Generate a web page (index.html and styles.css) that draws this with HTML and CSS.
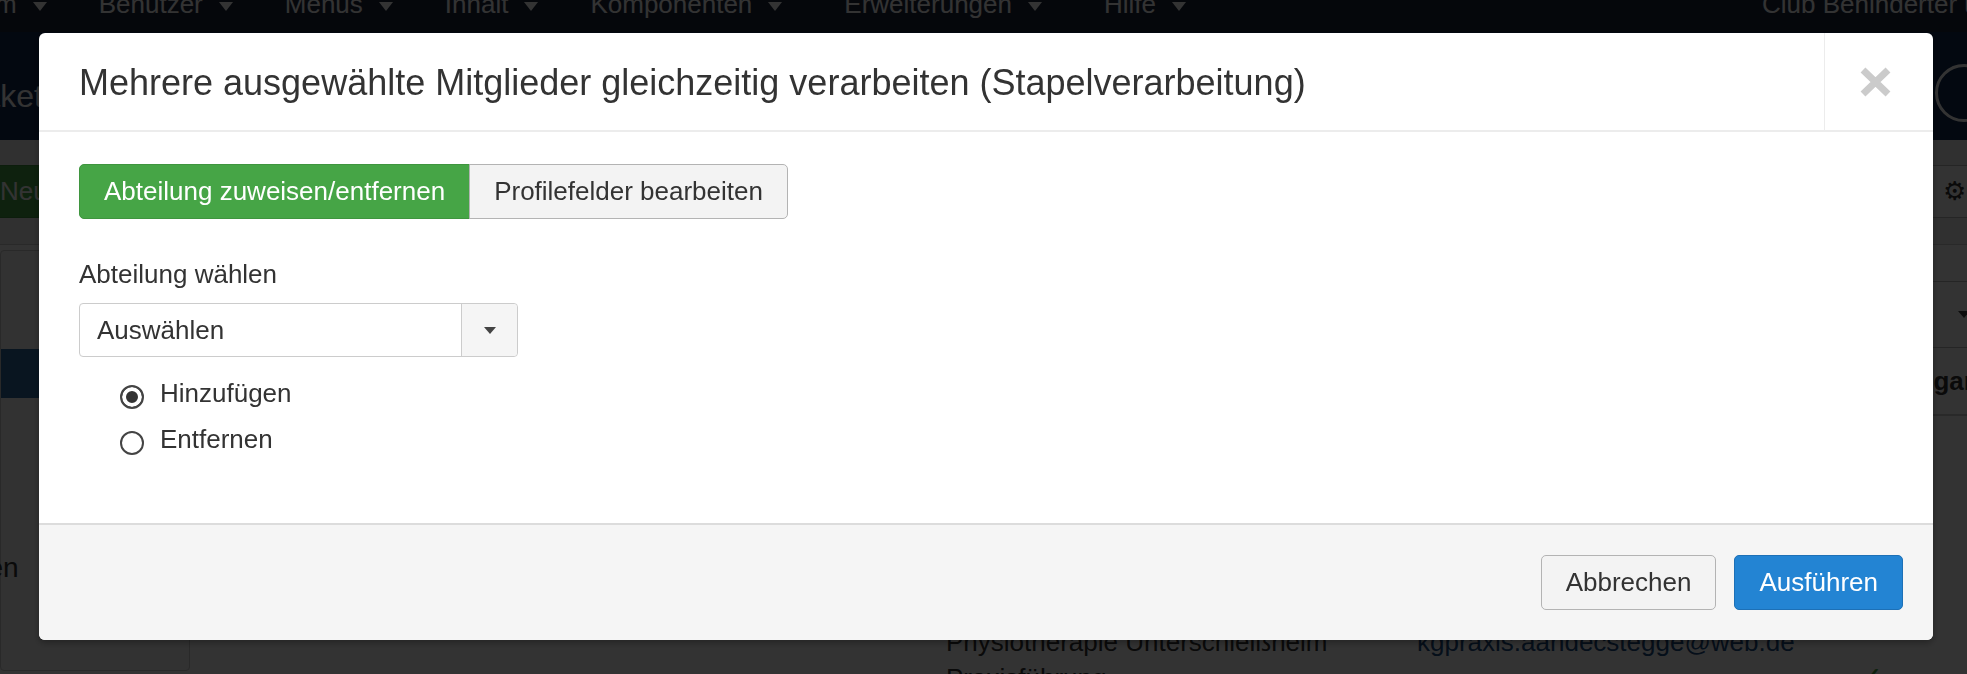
FILE: index.html
```
<!DOCTYPE html>
<html lang="de">
<head>
    <meta charset="UTF-8">
    <meta name="viewport" content="width=device-width, initial-scale=1.0">
    <title>Mitglieder - Stapelverarbeitung</title>
    <link rel="stylesheet" href="styles.css">
</head>
<body>
    <div class="page">
        <div class="topbar">
            <ul class="menu">
                <li>System<span class="caret-d"></span></li>
                <li>Benutzer<span class="caret-d"></span></li>
                <li>Menus<span class="caret-d"></span></li>
                <li>Inhalt<span class="caret-d"></span></li>
                <li class="wide">Komponenten<span class="caret-d"></span></li>
                <li class="wide">Erweiterungen<span class="caret-d"></span></li>
                <li>Hilfe<span class="caret-d"></span></li>
            </ul>
            <span class="site">Club Behinderter und ihrer Freunde</span>
        </div>

        <div class="banner">
            <h1>Pakete: Mitglieder</h1>
            <span class="ring"></span>
        </div>

        <div class="toolbar">
            <span class="btn-new">Neu</span>
            <span class="btn-opt"><span class="gear">⚙</span> Optionen</span>
        </div>

        <div class="main">
            <aside class="sidebar">
                <ul>
                    <li>Übersicht</li>
                    <li>Abteilungen</li>
                    <li class="active">Mitglieder</li>
                    <li>Funktionen</li>
                    <li>Felder</li>
                </ul>
                <h4 class="side-title">Optionen</h4>
            </aside>

            <div class="content">
                <div class="filters">
                    <span class="filter-select">- Status wählen -<span class="caret-s"></span></span>
                </div>
                <div class="list-head">
                    <span class="c-a">Name</span>
                    <span class="c-b">Abteilung</span>
                    <span class="c-c">E-Mail</span>
                    <span class="c-d">Eingang</span>
                </div>
                <div class="list-row first">
                    <span class="c-a"></span>
                    <span class="c-b">Vorstand</span>
                    <span class="c-c">info@example.de</span>
                    <span class="c-d"></span>
                </div>
                <div class="list-row">
                    <span class="c-a"></span>
                    <span class="c-b">Physiotherapie Unterschleißheim<br>Praxisführung</span>
                    <span class="c-c mail">kgpraxis.aandecstegge@web.de</span>
                    <span class="c-d check">✓</span>
                </div>
            </div>
        </div>
    </div>

    <div class="backdrop"></div>

    <div class="modal">
        <div class="modal-header">
            <h3 class="modal-title">Mehrere ausgewählte Mitglieder gleichzeitig verarbeiten (Stapelverarbeitung)</h3>
            <div class="close">
                <svg width="31" height="30" viewBox="0 0 31 30">
                    <path d="M3 3 L28 27 M28 3 L3 27" stroke="#cbcbcb" stroke-width="7" fill="none"/>
                </svg>
            </div>
        </div>

        <div class="modal-body">
            <div class="tabs">
                <span class="btn btn-success">Abteilung zuweisen/entfernen</span>
                <span class="btn">Profilefelder bearbeiten</span>
            </div>

            <div class="field-label">Abteilung wählen</div>
            <div class="select">
                <span class="select-value">Auswählen</span>
                <span class="select-btn"><span class="caret-s"></span></span>
            </div>

            <div class="options">
                <label class="option"><input type="radio" name="action" checked><span>Hinzufügen</span></label>
                <label class="option"><input type="radio" name="action"><span>Entfernen</span></label>
            </div>
        </div>

        <div class="modal-footer">
            <span class="btn">Abbrechen</span>
            <span class="btn btn-primary">Ausführen</span>
        </div>
    </div>
</body>
</html>
```

FILE: styles.css
```
* {
    box-sizing: border-box;
}

html,
body {
    margin: 0;
    height: 100%;
}

body {
    font-family: "Liberation Sans", Arial, sans-serif;
    font-size: 26px;
    line-height: 36px;
    color: #333;
    background: #fff;
    overflow: hidden;
}

/* Seite im Hintergrund */
.topbar {
    display: flex;
    height: 32px;
    background: #19233a;
    color: #fff;
    overflow: hidden;
}

.menu {
    list-style: none;
    display: flex;
    margin: -9px 0 0 -70px;
    padding: 0;
    line-height: 26px;
}

.menu li {
    margin-right: 52px;
    white-space: nowrap;
}

.menu li.wide {
    margin-right: 62px;
}

.caret-d {
    display: inline-block;
    margin-left: 16px;
    vertical-align: middle;
    border-top: 9px solid #fff;
    border-left: 7px solid transparent;
    border-right: 7px solid transparent;
}

.site {
    margin-left: auto;
    width: 205px;
    flex-shrink: 0;
    overflow: hidden;
    white-space: nowrap;
    line-height: 26px;
    margin-top: -9px;
}

.banner {
    display: flex;
    justify-content: space-between;
    align-items: flex-start;
    height: 108px;
    background: #10284f;
    color: #fff;
    overflow: hidden;
}

.banner h1 {
    margin: 0 0 0 -39px;
    padding-top: 44px;
    font-size: 32px;
    font-weight: normal;
    line-height: 40px;
    white-space: nowrap;
}

.ring {
    flex-shrink: 0;
    width: 58px;
    height: 58px;
    margin: 32px -26px 0 0;
    border: 3px solid #fff;
    border-radius: 50%;
}

.toolbar {
    display: flex;
    align-items: flex-start;
    height: 105px;
    padding-top: 25px;
    background: #f0f0f0;
    border-bottom: 1px solid #ccc;
    overflow: hidden;
}

.btn-new {
    margin-left: -40px;
    padding: 8px 24px 8px 39px;
    background: #46a546;
    border: 1px solid #3e933e;
    border-radius: 5px;
    color: #fff;
    line-height: 35px;
}

.btn-opt {
    flex-shrink: 0;
    margin-left: auto;
    margin-right: -137px;
    padding: 8px 24px 8px 14px;
    background: #fff;
    border: 1px solid #bbb;
    border-radius: 5px;
    line-height: 35px;
    white-space: nowrap;
}

.gear {
    font-family: "DejaVu Sans", sans-serif;
    font-size: 26px;
}

.main {
    display: flex;
}

.sidebar {
    flex-shrink: 0;
    width: 190px;
    height: 421px;
    margin-top: 5px;
    background: #f7f7f7;
    border: 1px solid #ccc;
    border-radius: 4px;
}

.sidebar ul {
    list-style: none;
    margin: 0;
    padding: 0;
}

.sidebar li {
    height: 49px;
    padding-left: 60px;
    line-height: 49px;
    white-space: nowrap;
    overflow: hidden;
}

.sidebar li.active {
    background: #2d6ca2;
    color: #fff;
}

.side-title {
    margin: 49px 0 0 -96px;
    font-size: 28px;
    font-weight: normal;
    line-height: 45px;
    white-space: nowrap;
}

.content {
    flex: 1;
    min-width: 0;
    overflow: hidden;
}

.filters {
    display: flex;
    justify-content: flex-end;
    padding-top: 36px;
}

.filter-select {
    display: flex;
    flex-shrink: 0;
    align-items: center;
    justify-content: space-between;
    width: 300px;
    height: 67px;
    margin-right: -18px;
    padding: 0 14px;
    background: #fff;
    border: 1px solid #bbb;
    border-radius: 4px;
}

.caret-s {
    display: inline-block;
    border-top: 7px solid #444;
    border-left: 6px solid transparent;
    border-right: 6px solid transparent;
}

.list-head,
.list-row {
    display: flex;
}

.list-head {
    align-items: center;
    height: 68px;
    border-bottom: 2px solid #ccc;
    font-weight: bold;
}

.list-row {
    padding-top: 10px;
}

.list-row.first {
    height: 198px;
}

.c-a {
    flex-shrink: 0;
    width: 756px;
}

.c-b {
    flex-shrink: 0;
    width: 471px;
}

.c-c {
    flex-shrink: 0;
    width: 441px;
}

.c-d {
    flex: 1;
    white-space: nowrap;
}

.list-head .c-d {
    padding-left: 35px;
}

.mail {
    color: #1a4a80;
}

.check {
    padding-top: 36px;
    color: #46a546;
    font-family: "DejaVu Sans", sans-serif;
    font-size: 30px;
}

/* Modal */
.backdrop {
    position: fixed;
    top: 0;
    right: 0;
    bottom: 0;
    left: 0;
    background: rgba(0, 0, 0, 0.8);
}

.modal {
    position: fixed;
    top: 33px;
    left: 39px;
    width: 1894px;
    background: #fff;
    border-radius: 6px;
    box-shadow: 0 3px 7px rgba(0, 0, 0, 0.3);
    overflow: hidden;
}

.modal-header {
    display: flex;
    height: 99px;
    border-bottom: 2px solid #ececec;
}

.modal-title {
    flex: 1;
    margin: 0;
    padding: 2px 0 0 40px;
    font-size: 36px;
    font-weight: normal;
    line-height: 95px;
    white-space: nowrap;
}

.close {
    display: flex;
    align-items: center;
    justify-content: center;
    width: 109px;
    padding-right: 8px;
    border-left: 1px solid #ececec;
}

.modal-body {
    padding: 32px 40px 57px;
}

.tabs {
    display: flex;
}

.btn {
    display: inline-block;
    padding: 8px 24px;
    background: #f3f3f3;
    border: 1px solid #b3b3b3;
    border-radius: 5px;
    color: #333;
    line-height: 37px;
    white-space: nowrap;
}

.tabs .btn:first-child {
    border-radius: 5px 0 0 5px;
}

.tabs .btn + .btn {
    margin-left: -1px;
    border-radius: 0 5px 5px 0;
}

.btn-success {
    background: #46a546;
    border-color: #3f953f;
    color: #fff;
}

.btn-primary {
    background: #2384d3;
    border-color: #1d70b6;
    color: #fff;
}

.field-label {
    margin-top: 37px;
}

.select {
    display: flex;
    width: 439px;
    height: 54px;
    margin-top: 11px;
    border: 1px solid #ccc;
    border-radius: 4px;
}

.select-value {
    flex: 1;
    padding-left: 17px;
    line-height: 52px;
}

.select-btn {
    display: flex;
    align-items: center;
    justify-content: center;
    width: 56px;
    background: #f5f5f5;
    border-left: 1px solid #ccc;
    border-radius: 0 4px 4px 0;
}

.options {
    margin-top: 17px;
    padding-left: 41px;
}

.option {
    display: flex;
    align-items: center;
    gap: 16px;
    height: 46px;
}

.option span {
    margin-bottom: 8px;
}

.option input {
    appearance: none;
    -webkit-appearance: none;
    width: 24px;
    height: 24px;
    margin: 0;
    border: 2px solid #444;
    border-radius: 50%;
    background: #fff;
}

.option input:checked {
    background: #333;
    box-shadow: inset 0 0 0 4px #fff;
}

.modal-footer {
    display: flex;
    justify-content: flex-end;
    align-items: center;
    gap: 18px;
    height: 117px;
    padding: 0 30px;
    background: #f5f5f5;
    border-top: 2px solid #dcdcdc;
}
```
